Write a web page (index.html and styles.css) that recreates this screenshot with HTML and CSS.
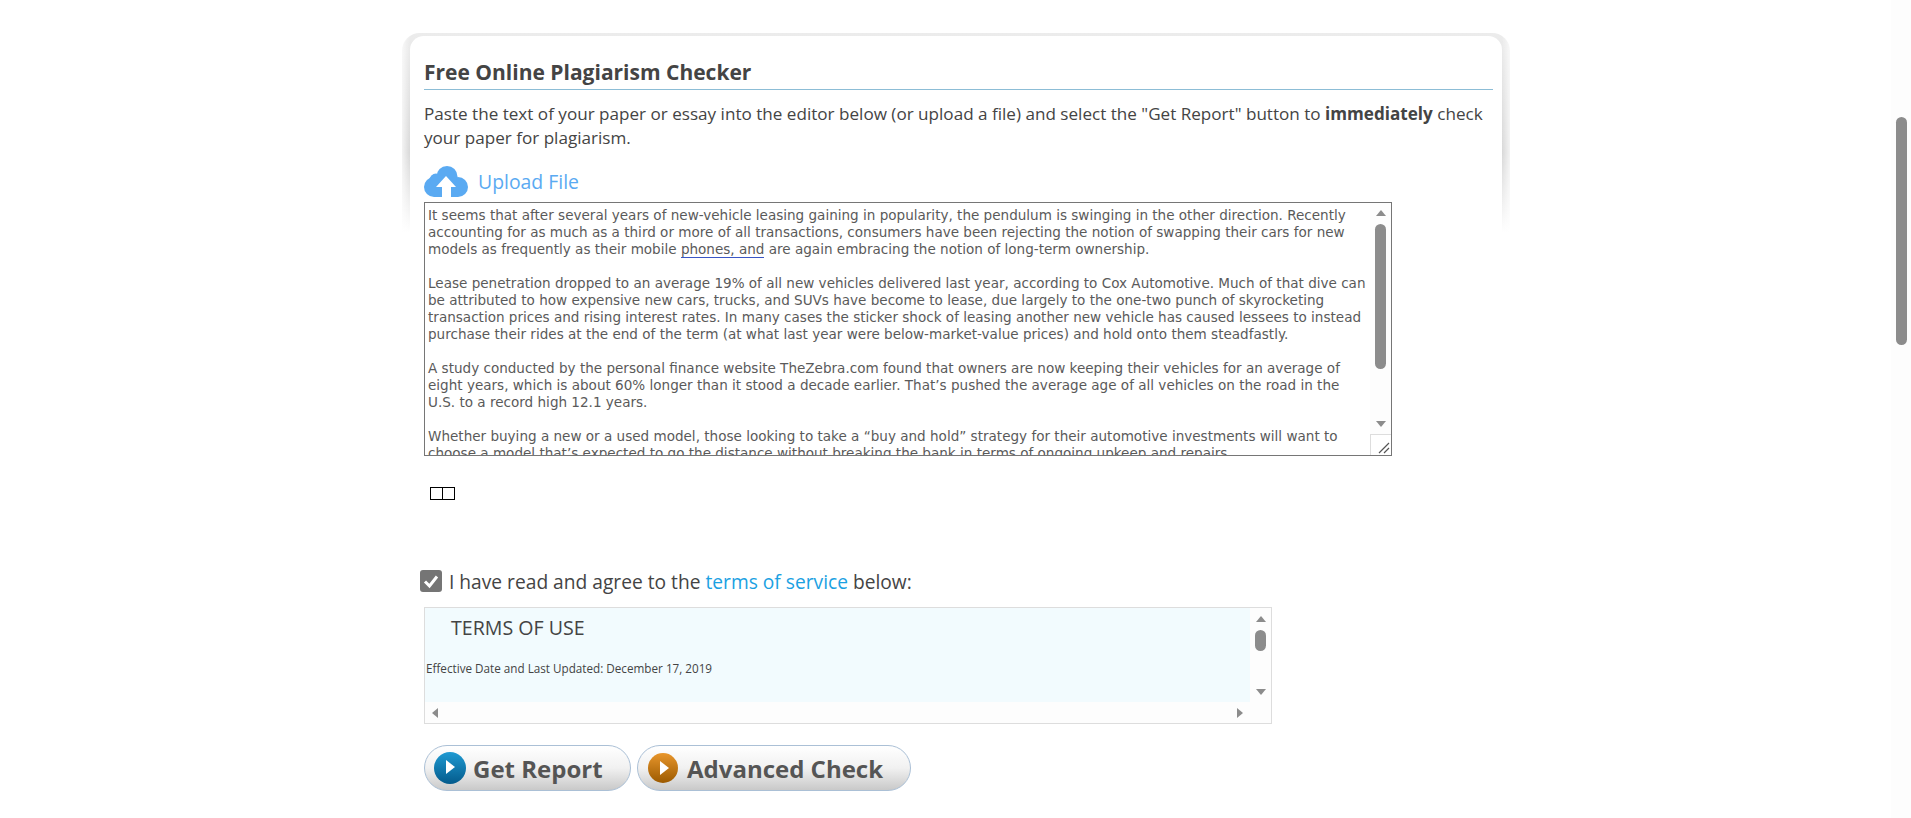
FILE: index.html
```html
<!DOCTYPE html>
<html lang="en">
<head>
    <meta charset="UTF-8">
    <meta name="viewport" content="width=device-width, initial-scale=1.0">
    <title>Free Online Plagiarism Checker</title>
    <link rel="stylesheet" href="styles.css">
</head>
<body>
    <div class="page">
        <div class="content">
            <div class="card">
                <h2 class="title">Free Online Plagiarism Checker</h2>
                <p class="intro">Paste the text of your paper or essay into the editor below (or upload a file) and select the "Get Report" button to <strong>immediately</strong> check your paper for plagiarism.</p>

                <a class="upload">
                    <svg class="cloud" viewBox="0 0 44 31" width="44" height="31">
                        <g fill="#5aaaf2">
                            <circle cx="10" cy="21" r="10"/>
                            <circle cx="34" cy="21" r="10"/>
                            <circle cx="23" cy="10.500" r="10.500"/>
                            <circle cx="12" cy="14" r="6.500"/>
                            <rect x="10" y="18" width="24" height="13"/>
                        </g>
                        <path fill="#fff" d="M22 10L32 21H27V31H18V21H12Z"/>
                    </svg>
                    <span>Upload File</span>
                </a>

                <div class="editor">
                    <div class="editor-text">It seems that after several years of new-vehicle leasing gaining in popularity, the pendulum is swinging in the other direction. Recently<br>accounting for as much as a third or more of all transactions, consumers have been rejecting the notion of swapping their cars for new<br>models as frequently as their mobile <span class="spell">phones, and</span> are again embracing the notion of long-term ownership.<br><br>Lease penetration dropped to an average 19% of all new vehicles delivered last year, according to Cox Automotive. Much of that dive can<br>be attributed to how expensive new cars, trucks, and SUVs have become to lease, due largely to the one-two punch of skyrocketing<br>transaction prices and rising interest rates. In many cases the sticker shock of leasing another new vehicle has caused lessees to instead<br>purchase their rides at the end of the term (at what last year were below-market-value prices) and hold onto them steadfastly.<br><br>A study conducted by the personal finance website TheZebra.com found that owners are now keeping their vehicles for an average of<br>eight years, which is about 60% longer than it stood a decade earlier. That’s pushed the average age of all vehicles on the road in the<br>U.S. to a record high 12.1 years.<br><br>Whether buying a new or a used model, those looking to take a “buy and hold” strategy for their automotive investments will want to<br>choose a model that’s expected to go the distance without breaking the bank in terms of ongoing upkeep and repairs.</div>
                    <div class="vbar editor-bar">
                        <i class="arrow up"></i>
                        <i class="thumb editor-thumb"></i>
                        <i class="arrow down"></i>
                    </div>
                    <div class="resizer">
                        <svg viewBox="0 0 21 21" width="21" height="21">
                            <path d="M9 19L19 9M14 19L19 14" stroke="#555" stroke-width="1.200" fill="none"/>
                        </svg>
                    </div>
                </div>

                <div class="tofu"><i></i><i></i></div>

                <label class="agree">
                    <span class="check">
                        <svg viewBox="0 0 22 22" width="22" height="22">
                            <path d="M5 11.500L9.500 16L17 6.500" stroke="#fff" stroke-width="3" fill="none"/>
                        </svg>
                    </span>
                    <span>I have read and agree to the <a class="terms-link">terms of service</a> below:</span>
                </label>

                <div class="terms">
                    <div class="terms-main">
                        <div class="terms-text">
                            <h3>TERMS OF USE</h3>
                            <p>Effective Date and Last Updated: December 17, 2019</p>
                        </div>
                        <div class="hbar">
                            <i class="arrow left"></i>
                            <i class="arrow right"></i>
                        </div>
                    </div>
                    <div class="vbar terms-bar">
                        <i class="arrow up"></i>
                        <i class="thumb terms-thumb"></i>
                        <i class="arrow down"></i>
                    </div>
                </div>

                <div class="actions">
                    <a class="btn btn-report"><i class="play play-blue"></i>Get Report</a>
                    <a class="btn btn-advanced"><i class="play play-orange"></i>Advanced Check</a>
                </div>
            </div>
        </div>
        <div class="page-bar"><i class="page-thumb"></i></div>
    </div>
</body>
</html>
```

FILE: styles.css
```css
html, body {
    margin: 0;
    height: 100%;
    overflow: hidden;
    background: #fff;
}
body {
    font-family: 'Open Sans', sans-serif;
    color: #444;
}
.page {
    display: flex;
    height: 818px;
}
.content {
    flex: 1;
    padding: 33px 0 0 402px;
}
.card {
    position: relative;
    isolation: isolate;
    width: 1108px;
    box-sizing: border-box;
    padding: 22px 0 0 22px;
}
/* grey edge that fades out behind the top of the card */
.card::before {
    content: "";
    position: absolute;
    left: 0;
    top: 0;
    width: 100%;
    height: 200px;
    border-radius: 18px 18px 0 0;
    background:
        linear-gradient(to right, rgba(255,255,255,0.7), transparent 8px),
        linear-gradient(to left, rgba(255,255,255,0.7), transparent 8px),
        linear-gradient(#ececec, #d8d8d8 60%, #fff);
    z-index: -2;
}
.card::after {
    content: "";
    position: absolute;
    left: 8px;
    top: 3px;
    width: 1092px;
    height: 210px;
    border-radius: 14px 14px 0 0;
    background: #fff;
    z-index: -1;
}
.title {
    margin: 0;
    width: 1069px;
    height: 34px;
    font-size: 21px;
    line-height: 34px;
    font-weight: 700;
    color: #444;
    border-bottom: 1px solid #8cbdd6;
}
.intro {
    margin: 12px 0 0;
    width: 1069px;
    font-size: 17.100px;
    line-height: 24px;
}
.upload {
    display: flex;
    align-items: center;
    gap: 10px;
    margin-top: 15px;
    height: 32px;
    font-size: 19.400px;
    color: #5aaaf2;
}
.editor {
    position: relative;
    display: flex;
    box-sizing: border-box;
    width: 968px;
    height: 254px;
    margin-top: 5px;
    border: 1px solid #767676;
    overflow: hidden;
    background: #fff;
}
.editor-text {
    flex: 1;
    padding: 4px 0 0 3px;
    font-family: 'DejaVu Sans', sans-serif;
    font-size: 13.550px;
    line-height: 17px;
    white-space: nowrap;
    color: #5a5a5a;
    overflow: hidden;
}
.spell {
    border-bottom: 1px solid #3a55c4;
}
.vbar {
    display: flex;
    flex-direction: column;
    align-items: center;
    background: #fdfdfd;
}
.editor-bar {
    width: 21px;
}
.thumb {
    display: block;
    width: 11px;
    border-radius: 6px;
    background: #8c8c8c;
}
.editor-thumb {
    height: 145px;
    margin-top: 8px;
}
.arrow {
    display: block;
    width: 0;
    height: 0;
    border-style: solid;
    border-color: transparent;
}
.arrow.up {
    margin-top: 7px;
    border-width: 0 5px 6px;
    border-bottom-color: #8c8c8c;
}
.arrow.down {
    border-width: 6px 5px 0;
    border-top-color: #8c8c8c;
}
.editor-bar .arrow.down {
    margin-top: 52px;
}
.arrow.left {
    border-width: 5px 6px 5px 0;
    border-right-color: #8c8c8c;
}
.arrow.right {
    border-width: 5px 0 5px 6px;
    border-left-color: #8c8c8c;
}
.resizer {
    position: absolute;
    right: 0;
    bottom: 0;
    box-sizing: border-box;
    width: 21px;
    height: 21px;
    border-top: 1px solid #ddd;
    border-left: 1px solid #ddd;
    background: #fff;
}
.resizer svg {
    display: block;
    margin: -1px 0 0 -1px;
}
.tofu {
    display: flex;
    margin: 31px 0 0 6px;
    height: 13px;
}
.tofu i {
    display: block;
    width: 11px;
    height: 11px;
    border: 1px solid #000;
}
.tofu i + i {
    margin-left: -1px;
}
.agree {
    display: flex;
    align-items: center;
    gap: 7px;
    margin: 69px 0 0 -4px;
    height: 24px;
    font-size: 19.200px;
    color: #444;
}
.check {
    display: block;
    width: 22px;
    height: 22px;
    border-radius: 3px;
    background: #757575;
}
.check svg {
    display: block;
}
.terms-link {
    color: #1ba1e2;
}
.terms {
    display: flex;
    box-sizing: border-box;
    width: 848px;
    height: 117px;
    margin-top: 14px;
    border: 1px solid #ddd;
}
.terms-main {
    width: 825px;
}
.terms-text {
    height: 94px;
    box-sizing: border-box;
    padding: 6px 0 0 1px;
    background: #f2fbfe;
}
.terms-text h3 {
    margin: 0 0 0 25px;
    font-size: 19.600px;
    line-height: 28px;
    font-weight: 400;
}
.terms-text p {
    margin: 18px 0 0;
    font-size: 11.700px;
    line-height: 16px;
}
.hbar {
    display: flex;
    justify-content: space-between;
    align-items: center;
    height: 21px;
    padding: 0 7px;
    background: #fdfdfd;
}
.terms-bar {
    flex: 1;
}
.terms-bar .arrow.up {
    margin-top: 8px;
}
.terms-thumb {
    height: 21px;
    margin-top: 8px;
}
.terms-bar .arrow.down {
    margin-top: 38px;
}
.actions {
    display: flex;
    gap: 6px;
    margin-top: 21px;
}
.btn {
    display: flex;
    align-items: center;
    box-sizing: border-box;
    height: 46px;
    padding-left: 9px;
    border: 1px solid #abc0d6;
    border-radius: 23px;
    background: linear-gradient(#fff, #f1f1f1 50%, #c9c9c9);
    font-size: 24px;
    font-weight: 700;
    color: #555;
    gap: 7px;
}
.btn-report {
    width: 207px;
}
.btn-advanced {
    width: 274px;
    padding-left: 10px;
    gap: 9px;
}
.play {
    position: relative;
    display: block;
    width: 32px;
    height: 32px;
    border-radius: 50%;
}
.btn-advanced .play {
    width: 30px;
    height: 30px;
}
.play::after {
    content: "";
    position: absolute;
    left: 12px;
    top: 8px;
    border-style: solid;
    border-width: 7px 0 7px 9px;
    border-color: transparent transparent transparent #fff;
}
.play-blue {
    background: linear-gradient(#1f9ad2, #045b8c);
}
.play-orange {
    background: linear-gradient(#e8962c, #9c5a00);
}
.page-bar {
    width: 20px;
    background: #fdfdfd;
}
.page-thumb {
    display: block;
    width: 11px;
    height: 228px;
    margin: 117px 0 0 5px;
    border-radius: 6px;
    background: #8c8c8c;
}
```
